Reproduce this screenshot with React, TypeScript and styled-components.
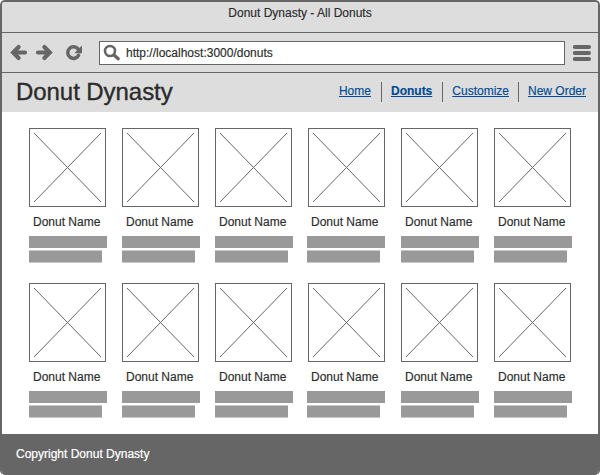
import React from "react";
import styled, { createGlobalStyle } from "styled-components";

const INK = "#666666";
const PANEL = "#dddddd";
const BAR = "#999999";

const GlobalStyle = createGlobalStyle`
  * { box-sizing: border-box; }
  body {
    margin: 0;
    background: #fff;
    color: #2b2b2b;
    font: 12px/14px "Liberation Sans", Arial, Helvetica, sans-serif;
    -webkit-text-stroke: 0.15px currentColor;
  }
`;

const Window = styled.div`
  width: 600px;
  height: 475px;
  display: flex;
  flex-direction: column;
  border: 2px solid ${INK};
  border-bottom: 0;
  border-radius: 5px;
  overflow: hidden;
  background: #fff;
`;

const TitleBar = styled.div`
  height: 31px;
  flex: none;
  padding-top: 4px;
  text-align: center;
  background: ${PANEL};
  border-bottom: 1px solid ${INK};
`;

const Toolbar = styled.div`
  height: 40px;
  flex: none;
  display: flex;
  align-items: flex-start;
  padding: 8px 6px 0 8px;
  background: ${PANEL};
  border-bottom: 1px solid ${INK};
`;

const NavIcons = styled.svg`
  width: 76px;
  height: 24px;
  display: block;
  flex: none;
  margin-right: 13px;
`;

const AddressBar = styled.div`
  width: 466px;
  height: 24px;
  display: flex;
  border: 1px solid ${INK};
  background: #fff;
`;

const SearchIcon = styled.svg`
  width: 26px;
  height: 22px;
  display: block;
  flex: none;
`;

const Address = styled.span`
  padding-top: 4px;
`;

const MenuIcon = styled.svg`
  width: 20px;
  height: 24px;
  display: block;
  margin-left: 7px;
`;

const SiteHeader = styled.header`
  height: 39px;
  flex: none;
  display: flex;
  justify-content: space-between;
  padding: 0 12px 0 14px;
  background: ${PANEL};
`;

const SiteName = styled.h1`
  margin: 0;
  padding-top: 5px;
  font-size: 24px;
  line-height: 28px;
  font-weight: 400;
  letter-spacing: -0.06px;
  white-space: nowrap;
  -webkit-text-stroke-width: 0.35px;
`;

const Nav = styled.nav`
  display: flex;
  padding-top: 9px;
`;

const NavItem = styled.div`
  height: 20px;
  padding: 2px 9px 0;
  border-left: 1px solid ${INK};
  &:first-child { border-left: 0; padding-right: 10px; }
  &:nth-child(2) { padding-right: 10px; }
  &:last-child { padding-right: 0; }
`;

const NavLink = styled.a<{ $active?: boolean }>`
  color: #004b94;
  font-weight: ${(p) => (p.$active ? 700 : 400)};
  text-decoration: underline;
`;

const Catalog = styled.main`
  height: 322px;
  flex: none;
  display: grid;
  grid-template-columns: repeat(6, 78px);
  grid-auto-rows: 155px;
  column-gap: 15px;
  padding: 16px 0 0 27px;
`;

const Card = styled.div``;

const Thumb = styled.svg`
  display: block;
  width: 77px;
  height: 79px;
  border: 1px solid ${INK};
`;

const Details = styled.div<{ $nudge: boolean }>`
  margin-left: ${(p) => (p.$nudge ? -1 : 0)}px;
`;

const DonutName = styled.div`
  padding: 8px 0 0 4px;
  margin-bottom: 7px;
  white-space: nowrap;
`;

const LongBar = styled.div`
  width: 78px;
  height: 12px;
  margin-bottom: 2px;
  background: ${BAR};
`;

const ShortBar = styled.div`
  width: 73px;
  height: 13px;
  background: ${BAR};
  border: solid #c8c8c8;
  border-width: 1px 0;
`;

const Footer = styled.footer`
  flex: 1;
  padding: 13px 14px;
  background: ${INK};
  color: #fff;
  -webkit-text-stroke-width: 0.2px;
`;

const links = ["Home", "Donuts", "Customize", "New Order"];
const donuts = Array.from({ length: 12 }, (_, i) => i);

export default function App() {
  return (
    <>
      <GlobalStyle />
      <Window>
        <TitleBar>Donut Dynasty - All Donuts</TitleBar>
        <Toolbar>
          <NavIcons viewBox="10 41 76 24" fill="none" stroke={INK} strokeWidth="4.2">
            <path d="M18.6 47 13.2 52.5 18.6 58M13.8 52.5H25" strokeLinecap="round" />
            <path d="M44.4 47 49.8 52.5 44.4 58M49.2 52.5H38" strokeLinecap="round" />
            <path d="M78 48.9A5.8 5.8 0 1 0 78.6 55.4" strokeWidth="3.5" strokeLinecap="round" />
            <path d="M82 45.5V53.2H74.6L76.9 50.6Z" fill={INK} stroke="none" />
          </NavIcons>
          <AddressBar>
            <SearchIcon viewBox="100 42 26 22" fill="none" stroke={INK}>
              <circle cx="110" cy="51" r="5" strokeWidth="2.6" />
              <path d="M114 55 118.2 58.7" strokeWidth="3.4" strokeLinecap="round" />
            </SearchIcon>
            <Address>http://localhost:3000/donuts</Address>
          </AddressBar>
          <MenuIcon viewBox="572 41 20 24" stroke={INK} strokeWidth="4" strokeLinecap="round">
            <path d="M574.8 47H589M574.8 53H589M574.8 59H589" />
          </MenuIcon>
        </Toolbar>
        <SiteHeader>
          <SiteName>Donut Dynasty</SiteName>
          <Nav>
            {links.map((label) => (
              <NavItem key={label}>
                <NavLink $active={label === "Donuts"}>{label}</NavLink>
              </NavItem>
            ))}
          </Nav>
        </SiteHeader>
        <Catalog>
          {donuts.map((i) => (
            <Card key={i}>
              <Thumb viewBox="0 0 75 77" stroke={INK} strokeWidth="1">
                <path d="M4 4 71 73M71 4 4 73" />
              </Thumb>
              <Details $nudge={i % 6 === 3}>
                <DonutName>Donut Name</DonutName>
                <LongBar />
                <ShortBar />
              </Details>
            </Card>
          ))}
        </Catalog>
        <Footer>Copyright Donut Dynasty</Footer>
      </Window>
    </>
  );
}
